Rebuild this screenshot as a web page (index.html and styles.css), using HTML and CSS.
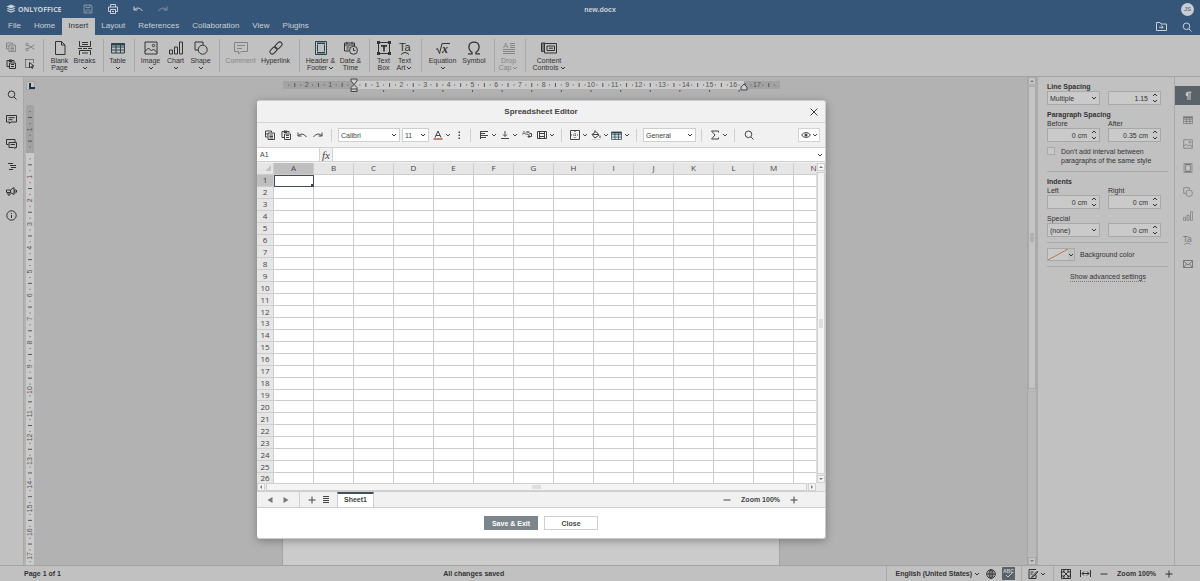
FILE: index.html
```html
<!DOCTYPE html>
<html lang="en">
<head>
  <meta charset="UTF-8">
  <meta name="viewport" content="width=device-width, initial-scale=1.0">
  <title>new.docx</title>
  <link rel="stylesheet" href="styles.css">
</head>
<body>

  <!-- Icons used in more than one place -->
  <svg class="defs" aria-hidden="true">
    <symbol id="i-down" viewBox="0 0 6 6"><path d="M1 2l2 2 2-2"/></symbol>
    <symbol id="i-undo" viewBox="0 0 10 10"><path d="M1 2.500v3.500h3.500M1 6q4.500-4.500 8.500 1"/></symbol>
    <symbol id="i-redo" viewBox="0 0 10 10"><path d="M9 2.500v3.500h-3.500M9 6q-4.500-4.500-8.500 1"/></symbol>
    <symbol id="i-copy" viewBox="0 0 10 10"><path d="M2.500 7h-2V1h6v1.500M3 3h6.500v6.500H3zM4.500 5h3.500M4.500 6.500h3.500M4.500 8h3.500M2 3v2"/></symbol>
    <symbol id="i-paste" viewBox="0 0 10 10"><path d="M3 7.500H1V1.500h7v1.500M3 1h3v1.500H3zM3.500 4h6v5.500h-6zM5 5.500h3M5 7.500h3"/></symbol>
    <symbol id="i-search" viewBox="0 0 10 10"><circle cx="4.500" cy="4.300" r="3.300"/><path d="M7 7l2.500 2.500"/></symbol>
    <symbol id="i-plus" viewBox="0 0 8 8"><path d="M4 .5v7M.5 4h7"/></symbol>
    <symbol id="i-minus" viewBox="0 0 8 8"><path d="M.5 4h7"/></symbol>
    <symbol id="i-table" viewBox="0 0 14 14"><path d="M.5 2.500h13v9.500H.5zM.5 6h13M.5 9h13M5 3v9M9.500 3v9"/><path class="fill" d="M.5 2.500h13v2H.5z"/></symbol>
    <symbol id="i-image" viewBox="0 0 14 14"><path d="M1 1h12v12H1zM1 10.500l3.500-3.500 3 3 2-2 3.500 3.500"/><circle cx="9.500" cy="4.500" r="1.200"/></symbol>
    <symbol id="i-chart" viewBox="0 0 14 14"><path d="M.5 9h3v4h-3zM5.500 6h3v7h-3zM10.500 1h3v12h-3z"/></symbol>
    <symbol id="i-shape" viewBox="0 0 14 14"><path d="M4.500 9H1V1h8v3"/><circle cx="8.700" cy="8.700" r="4.500"/></symbol>
    <symbol id="i-head" viewBox="0 0 14 14"><path d="M1.500.5h11v13h-11zM3.500 3.500v7M10.500 3.500v7"/><path class="fill" d="M3 1.500h8v1.500H3zM3 11h8v1.500H3z"/></symbol>
    <symbol id="i-spin" viewBox="0 0 6 12"><path d="M1 4l2-2 2 2M1 8l2 2 2-2"/></symbol>
  </svg>

  <header class="header">
    <div class="title-row">
      <a class="logo" href="#">
        <svg class="ic10" viewBox="0 0 10 10"><path class="fill" d="M5 .5l4.500 2-4.500 2-4.500-2zM.5 4.500l1.500-.6 3 1.300 3-1.300 1.500.6-4.500 2zM.5 6.700L2 6l3 1.400L8 6l1.500.7-4.500 2.100z"/></svg>
        ONLYOFFICE
      </a>
      <div class="quick">
        <button class="faded" aria-label="Save"><svg class="ic10" viewBox="0 0 10 10"><path d="M1 1h7l1 1v7H1zM3 1v2.500h4V1M3 9V6h4v3"/></svg></button>
        <button aria-label="Print"><svg class="ic10" viewBox="0 0 10 10"><path d="M2.500 3V.5h5V3M2 7.500H.5V3h9v4.500H8M2.500 5.500h5v4h-5zM4 7.500h2"/></svg></button>
        <button aria-label="Undo"><svg class="ic10"><use href="#i-undo"/></svg></button>
        <button class="faded" aria-label="Redo"><svg class="ic10"><use href="#i-redo"/></svg></button>
      </div>
      <div class="doc-name">new.docx</div>
      <div class="avatar">JS</div>
    </div>
    <nav class="tabs">
      <a href="#">File</a>
      <a href="#">Home</a>
      <a href="#" class="active">Insert</a>
      <a href="#">Layout</a>
      <a href="#">References</a>
      <a href="#">Collaboration</a>
      <a href="#">View</a>
      <a href="#">Plugins</a>
      <div class="tab-tools">
        <button aria-label="Open file location"><svg class="ic11" viewBox="0 0 11 11"><path d="M.5 9.500V1.500h3.500l1 1.500h5.500v6.500zM3 6.200h4M5.500 4.500l1.700 1.700-1.700 1.700"/></svg></button>
        <button aria-label="Search"><svg class="ic10"><use href="#i-search"/></svg></button>
      </div>
    </nav>
  </header>

  <div class="toolbar">
    <div class="clip">
      <button class="off" aria-label="Copy"><svg class="ic10"><use href="#i-copy"/></svg></button>
      <button class="off" aria-label="Cut"><svg class="ic10" viewBox="0 0 10 10"><circle cx="2" cy="2.500" r="1.300"/><circle cx="2" cy="7.500" r="1.300"/><path d="M3 3.300l6.500 4M3 6.700l6.500-4"/></svg></button>
      <button aria-label="Paste"><svg class="ic10"><use href="#i-paste"/></svg></button>
      <button aria-label="Select all"><svg class="ic10" viewBox="0 0 10 10"><path stroke-dasharray="1 1" d="M.5.5h8v3M.5.5v8h4"/><path d="M4.500 3.500v5.500l1.500-1.500 1 2 1-.5-1-2h2z"/></svg></button>
    </div>

    <div class="group">
      <button class="tool m"><svg viewBox="0 0 14 14"><path d="M2.500.5h6l3.500 3.500v9.500H2.500zM8.500.5V4H12"/></svg>Blank<br>Page</button>
      <button class="tool m"><svg viewBox="0 0 14 14"><path d="M1.500 0v5.500h11V0M4 1.500h6M4 3.500h6M0 7.500h4M5 7.500h4M10 7.500h4M1.500 14v-4.500h11V14M4 12h6"/></svg>Breaks<svg class="dn"><use href="#i-down"/></svg></button>
    </div>
    <div class="group">
      <button class="tool s"><svg class="teal"><use href="#i-table"/></svg>Table<svg class="dn"><use href="#i-down"/></svg></button>
    </div>
    <div class="group">
      <button class="tool m"><svg><use href="#i-image"/></svg>Image<svg class="dn"><use href="#i-down"/></svg></button>
      <button class="tool m"><svg><use href="#i-chart"/></svg>Chart<svg class="dn"><use href="#i-down"/></svg></button>
      <button class="tool m"><svg><use href="#i-shape"/></svg>Shape<svg class="dn"><use href="#i-down"/></svg></button>
    </div>
    <div class="group">
      <button class="tool l off" disabled><svg viewBox="0 0 14 14"><path d="M.5 1.500h13v9H7l-2.500 2.500v-2.500h-4zM3 4.500h8M3 7.500h5"/></svg>Comment</button>
      <button class="tool l"><svg viewBox="0 0 14 14"><rect x="-4" y="-2.300" width="8" height="4.600" rx="2.300" transform="translate(4.500 9.500) rotate(-45)"/><rect x="-4" y="-2.300" width="8" height="4.600" rx="2.300" transform="translate(9.500 4.500) rotate(-45)"/></svg>Hyperlink</button>
    </div>
    <div class="group">
      <button class="tool l"><svg class="teal"><use href="#i-head"/></svg>Header &amp;<br><span>Footer<svg class="dn"><use href="#i-down"/></svg></span></button>
      <button class="tool m"><svg viewBox="0 0 14 14"><path d="M5 10H.5V2h10v3M.5 4h10M3 .8V3M8 .8V3M2.500 6h3M2.500 8h2"/><circle cx="9.500" cy="9.300" r="4"/><path d="M9.500 7v2.500h2"/></svg>Date &amp;<br>Time</button>
    </div>
    <div class="group">
      <button class="tool s"><svg viewBox="0 0 14 14"><path d="M1.500 1.500h11v11h-11z"/><path class="fill" d="M0 0h3v3H0zM11 0h3v3h-3zM0 11h3v3H0zM11 11h3v3h-3z"/><path stroke-width="1.700" d="M4 4.800h6M7 5v5.500"/></svg>Text<br>Box</button>
      <button class="tool s"><svg viewBox="0 0 14 14"><text x="1" y="10" font-size="11">Ta</text><path d="M3 13.500q4-4 8 0"/></svg>Text<br><span>Art<svg class="dn"><use href="#i-down"/></svg></span></button>
    </div>
    <div class="group">
      <button class="tool l"><svg viewBox="0 0 14 14"><path d="M0 8.500l1.500-1 2 5L6 2.500h8"/><text class="serif" x="6" y="12" font-size="12">x</text></svg>Equation<svg class="dn"><use href="#i-down"/></svg></button>
      <button class="tool n"><svg viewBox="0 0 14 14"><path stroke-width="1.300" d="M1 12.800h4v-1.500C.5 8.500.8 1.200 7 1.200s6.500 7.300 2 10.100v1.500h4"/></svg>Symbol</button>
    </div>
    <div class="group">
      <button class="tool s off" disabled><svg viewBox="0 0 14 14"><text x="1" y="7" font-size="8">A</text><path d="M8 2.500h5M8 4.500h5M8 6.500h5M1 8.500h12M1 10.500h12M1 12.500h12"/></svg>Drop<br><span>Cap<svg class="dn"><use href="#i-down"/></svg></span></button>
    </div>
    <div class="group">
      <button class="tool xl"><svg class="wide" viewBox="0 0 16 14"><path d="M2.500 10.500H.5V2H4M3.500 2.500h12v9.500h-12zM2 2v8.500M6 5h7.500v4.500H6zM8 7.200h4"/></svg>Content<br><span>Controls<svg class="dn"><use href="#i-down"/></svg></span></button>
    </div>
  </div>

  <main class="main">
    <aside class="rail left">
      <button aria-label="Search"><svg class="ic10"><use href="#i-search"/></svg></button>
      <button aria-label="Comments"><svg class="ic11" viewBox="0 0 11 11"><path d="M.5 1.500h10v6.500H5L3.500 9.500V8h-3zM2.500 3.700h6M2.500 5.700h4"/></svg></button>
      <button aria-label="Chat"><svg class="ic11" viewBox="0 0 11 11"><path d="M2.500 6.500h-2v-5h8.500V4M3 4.500h7.500v5H9v1L7.500 9.500H3zM4.500 6.500h4.500"/></svg></button>
      <button aria-label="Headings"><svg class="ic10" viewBox="0 0 10 10"><path d="M1 1.500h5M3 3.500h6M4 5.500h5M2 7.500h4"/></svg></button>
      <button aria-label="Feedback"><svg class="ic11" viewBox="0 0 11 11"><path d="M.5 4h4l3.500-2.500v7L4.500 6.500h-4zM2 6.500V9h2V6.500M9 3v4.500M10.500 4v2.500M4.500 4v2.500"/></svg></button>
      <button aria-label="About"><svg class="ic11" viewBox="0 0 11 11"><circle cx="5.500" cy="5.500" r="4.700"/><path d="M5.500 5v3M5.500 3v1"/></svg></button>
    </aside>

    <section class="canvas">
      <div class="v-side">
        <div class="tab-mark"></div>
        <svg id="vRuler" class="v-ruler"></svg>
      </div>
      <div class="paper-area">
        <svg id="hRuler" class="h-ruler"></svg>
        <div class="paper"></div>
      </div>
      <div class="scroll">
        <i class="arrow up"></i>
        <div class="thumb"><i></i></div>
        <i class="arrow"></i>
      </div>
    </section>

    <aside class="panel">
      <h3>Line Spacing</h3>
      <div class="pair">
        <select aria-label="Line spacing"><option>Multiple</option></select>
        <span class="spin"><input value="1.15" aria-label="Line spacing value"><svg><use href="#i-spin"/></svg></span>
      </div>
      <h3 class="next">Paragraph Spacing</h3>
      <div class="pair">
        <label for="before">Before</label><label for="after">After</label>
        <span class="spin"><input id="before" value="0 cm"><svg><use href="#i-spin"/></svg></span>
        <span class="spin"><input id="after" value="0.35 cm"><svg><use href="#i-spin"/></svg></span>
      </div>
      <div class="check">
        <input type="checkbox" id="noInterval">
        <label for="noInterval">Don't add interval between<br>paragraphs of the same style</label>
      </div>
      <hr>
      <h3>Indents</h3>
      <div class="pair">
        <label for="indL">Left</label><label for="indR">Right</label>
        <span class="spin"><input id="indL" value="0 cm"><svg><use href="#i-spin"/></svg></span>
        <span class="spin"><input id="indR" value="0 cm"><svg><use href="#i-spin"/></svg></span>
      </div>
      <div class="pair special">
        <label for="special">Special</label><span></span>
        <select id="special"><option>(none)</option></select>
        <span class="spin"><input value="0 cm" aria-label="Special indent"><svg><use href="#i-spin"/></svg></span>
      </div>
      <hr>
      <div class="bg-row">
        <button id="bgColor" class="swatch"><svg class="none" viewBox="0 0 20 11"><path d="M0 11L20 0"/></svg><svg class="dn"><use href="#i-down"/></svg></button>
        <label for="bgColor">Background color</label>
      </div>
      <hr>
      <a class="advanced" href="#">Show advanced settings</a>
    </aside>

    <aside class="rail right">
      <button class="active" aria-label="Paragraph"><svg class="ic10" viewBox="0 0 10 10"><path class="fill" d="M5 1v4.500a2.200 2.200 0 010-4.500z"/><path d="M4.500 1.200h4M5 1v8M7 1v8"/></svg></button>
      <button aria-label="Table"><svg class="ic10"><use href="#i-table"/></svg></button>
      <button aria-label="Image"><svg class="ic10"><use href="#i-image"/></svg></button>
      <button aria-label="Header"><svg class="ic10"><use href="#i-head"/></svg></button>
      <button aria-label="Shape"><svg class="ic10"><use href="#i-shape"/></svg></button>
      <button aria-label="Chart"><svg class="ic10"><use href="#i-chart"/></svg></button>
      <button aria-label="Text art"><svg class="ic11" viewBox="0 0 14 14"><text x="1" y="10" font-size="11">Ta</text><path d="M3 13.500q4-4 8 0"/></svg></button>
      <button aria-label="Mail merge"><svg class="ic10" viewBox="0 0 10 10"><path d="M.5 1.500h9v7h-9zM.5 2l4.500 4 4.500-4M.5 8.500l3-3.500M9.500 8.500l-3-3.500"/></svg></button>
    </aside>
  </main>

  <footer class="status">
    <span class="pages">Page 1 of 1</span>
    <span class="saved">All changes saved</span>
    <div class="st-group lang">
      <button>English (United States)<svg class="dn"><use href="#i-down"/></svg></button>
      <button aria-label="Document language"><svg class="ic10" viewBox="0 0 10 10"><circle cx="5" cy="5" r="4.300"/><ellipse cx="5" cy="5" rx="2" ry="4.300"/><path d="M.7 5h8.600M5 .7v8.600"/></svg></button>
      <button class="spell" aria-label="Spell checking"><svg class="ic11" viewBox="0 0 11 11"><text x="0" y="5" font-size="5">ABC</text><path d="M3 7l2 2 5-5"/></svg></button>
    </div>
    <div class="st-group review">
      <button aria-label="Track changes"><svg class="ic10" viewBox="0 0 10 10"><path d="M8 6v3.500H1V.5h7M2.500 3h3M2.500 5h2M9.500 2l-5 5-1 1.500 1.800-.7 4.700-5z"/></svg><svg class="dn"><use href="#i-down"/></svg></button>
    </div>
    <div class="st-group zoom">
      <button aria-label="Fit to page"><svg class="ic10" viewBox="0 0 10 10"><path d="M.5.5h9v9h-9zM2 4V2h2M6 2h2v2M8 6v2H6M4 8H2V6M2 2l6 6M8 2L2 8"/></svg></button>
      <button aria-label="Fit to width"><svg class="ic11" viewBox="0 0 11 11"><path d="M.5 2v7M10.500 2v7M2 5.500h7M4 3.500l-2 2 2 2M7 3.500l2 2-2 2"/></svg></button>
      <button aria-label="Zoom out"><svg class="ic8"><use href="#i-minus"/></svg></button>
      <span>Zoom 100%</span>
      <button aria-label="Zoom in"><svg class="ic8"><use href="#i-plus"/></svg></button>
    </div>
  </footer>

  <!-- Spreadsheet editor window -->
  <div class="dialog" role="dialog" aria-labelledby="dlgTitle">
    <div class="dlg-title">
      <h2 id="dlgTitle">Spreadsheet Editor</h2>
      <button class="close" aria-label="Close window"><svg class="ic8" viewBox="0 0 8 8"><path d="M.5.5l7 7M7.500.5l-7 7"/></svg></button>
    </div>

    <div class="dlg-tools">
      <button aria-label="Copy"><svg class="ic10"><use href="#i-copy"/></svg></button>
      <button aria-label="Paste"><svg class="ic10"><use href="#i-paste"/></svg></button>
      <button aria-label="Undo"><svg class="ic10"><use href="#i-undo"/></svg></button>
      <button aria-label="Redo"><svg class="ic10"><use href="#i-redo"/></svg></button>
      <i class="sep"></i>
      <select class="font" aria-label="Font"><option>Calibri</option></select>
      <select class="size" aria-label="Font size"><option>11</option></select>
      <button class="dd" aria-label="Font color"><svg class="ic10" viewBox="0 0 10 10"><path d="M2 7.500L5 1l3 6.500M3 5.500h4"/><path class="rust" d="M.5 8h9v2h-9z"/></svg><svg class="dn"><use href="#i-down"/></svg></button>
      <button class="dots" aria-label="More"><svg class="ic10" viewBox="0 0 10 10"><path class="fill" d="M4.500 1.500H6V3H4.500zM4.500 4.500H6V6H4.500zM4.500 7.500H6V9H4.500z"/></svg></button>
      <i class="sep"></i>
      <button class="dd" aria-label="Horizontal align"><svg class="ic10" viewBox="0 0 10 10"><path d="M1.500 1v8M2 1.500h7M2 3.500h4M2 5.500h7M2 7.500h5"/></svg><svg class="dn"><use href="#i-down"/></svg></button>
      <button class="dd" aria-label="Vertical align"><svg class="ic10" viewBox="0 0 10 10"><path d="M5 1v5M3 4.500l2 2 2-2M1 8.500h8"/></svg><svg class="dn"><use href="#i-down"/></svg></button>
      <button aria-label="Wrap text"><svg class="ic10" viewBox="0 0 10 10"><text x="0" y="5" font-size="6">AB</text><path d="M8 3.500h1.500v3H6M7.500 5L6 6.500 7.500 8"/></svg></button>
      <button class="dd" aria-label="Merge"><svg class="ic10" viewBox="0 0 10 10"><path d="M.5 1.500h9v7h-9zM2.500 3.500h5v3h-5zM2.500 1.500v7M7.500 1.500v7"/></svg><svg class="dn"><use href="#i-down"/></svg></button>
      <i class="sep"></i>
      <button class="dd" aria-label="Borders"><svg class="ic10" viewBox="0 0 10 10"><path d="M.5.5h9v9h-9z"/><path stroke-dasharray="1 1" d="M5 1v8M1 5h8"/></svg><svg class="dn"><use href="#i-down"/></svg></button>
      <button class="dd" aria-label="Fill"><svg class="ic10" viewBox="0 0 10 10"><path d="M1 4.500l4-3 3 3.500-4 3zM4 2V.3M1.500 4.500h6M9 5.500v2.500"/><path class="pale" d="M.5 9h9v1h-9z"/></svg><svg class="dn"><use href="#i-down"/></svg></button>
      <button class="dd teal" aria-label="Format as table"><svg class="ic11"><use href="#i-table"/></svg><svg class="dn"><use href="#i-down"/></svg></button>
      <i class="sep"></i>
      <select class="format" aria-label="Number format"><option>General</option></select>
      <i class="sep"></i>
      <button class="dd" aria-label="Summation"><svg class="ic10" viewBox="0 0 10 10"><path d="M8.500 2.500V1H1.500l3.500 4-3.500 4h7V7.500"/></svg><svg class="dn"><use href="#i-down"/></svg></button>
      <i class="sep"></i>
      <button aria-label="Find"><svg class="ic10"><use href="#i-search"/></svg></button>
      <button class="view" aria-label="View settings"><svg class="ic10" viewBox="0 0 10 10"><path d="M.5 5q4.500-5 9 0-4.500 5-9 0z"/><circle class="fill" cx="5" cy="5" r="1.500"/></svg><svg class="dn"><use href="#i-down"/></svg></button>
    </div>

    <div class="formula">
      <input class="cell-name" value="A1" aria-label="Cell name">
      <button class="fx">fx</button>
      <input class="cell-text" aria-label="Formula">
      <button class="expand" aria-label="Expand"><svg class="dn"><use href="#i-down"/></svg></button>
    </div>

    <div class="sheet">
      <div class="grid-wrap">
        <table id="grid" class="grid"></table>
      </div>
      <div class="scroll small">
        <i class="arrow up"></i>
        <div class="thumb"><i></i></div>
        <i class="arrow"></i>
      </div>
    </div>
    <div class="h-scroll">
      <i class="arrow prev"></i>
      <div class="thumb"><i></i></div>
      <i class="arrow fwd"></i>
    </div>

    <div class="sheet-bar">
      <button aria-label="Previous sheet"><svg class="ic8" viewBox="0 0 8 8"><path class="fill" d="M6.500 1v6L1.500 4z"/></svg></button>
      <button aria-label="Next sheet"><svg class="ic8" viewBox="0 0 8 8"><path class="fill" d="M1.500 1v6l5-3z"/></svg></button>
      <i class="line"></i>
      <button class="add" aria-label="Add sheet"><svg class="ic8"><use href="#i-plus"/></svg></button>
      <button class="add" aria-label="Sheet list"><svg class="ic8" viewBox="0 0 8 8"><path d="M1 .5h6M1 2.500h6M1 4.500h6M1 6.500h6"/></svg></button>
      <a class="sheet-tab" href="#">Sheet1</a>
      <div class="sheet-zoom">
        <button aria-label="Zoom out"><svg class="ic8"><use href="#i-minus"/></svg></button>
        <span>Zoom 100%</span>
        <button aria-label="Zoom in"><svg class="ic8"><use href="#i-plus"/></svg></button>
      </div>
    </div>

    <div class="dlg-footer">
      <button class="primary">Save &amp; Exit</button>
      <button>Close</button>
    </div>
  </div>

  <script src="script.js"></script>
</body>
</html>
```
FILE: styles.css
```css
* {
  box-sizing: border-box;
}

body {
  margin: 0;
  height: 100vh;
  overflow: hidden;
  display: flex;
  flex-direction: column;
  font-family: "Liberation Sans", Arial, sans-serif;
  font-size: 7px;
  line-height: 9px;
  color: #333;
  background: #b2b2b2;
}

button, input, select {
  font: inherit;
  color: inherit;
  margin: 0;
  padding: 0;
  border: 0;
  background: none;
  border-radius: 0;
}

button {
  display: flex;
  align-items: center;
  justify-content: center;
}

a {
  color: inherit;
  text-decoration: none;
}

h2, h3 {
  margin: 0;
  font-size: 7px;
  line-height: 9px;
}

svg {
  display: block;
  flex: none;
  fill: none;
  stroke: currentColor;
  stroke-width: 1;
}

svg text {
  fill: currentColor;
  stroke: none;
  font-family: "Liberation Sans", Arial, sans-serif;
}

svg .serif {
  font-family: "Liberation Serif", serif;
  font-style: italic;
  font-weight: bold;
}

svg .fill {
  fill: currentColor;
  stroke: none;
}

.defs {
  position: absolute;
  width: 0;
  height: 0;
}

.ic8 { width: 8px; height: 8px; }
.ic10 { width: 10px; height: 10px; }
.ic11 { width: 11px; height: 11px; }
.dn { width: 6px; height: 6px; }
.teal { color: #2b4750; }

/* Header */
.header {
  background: #365679;
  color: #c9d0d8;
}

.title-row {
  display: grid;
  grid-template-columns: 80px 1fr auto 1fr 80px;
  align-items: center;
  height: 18px;
}

.logo {
  display: flex;
  align-items: center;
  gap: 2px;
  padding-left: 6px;
  font-family: "Open Sans", sans-serif;
  font-size: 7px;
  font-weight: bold;
}

.quick {
  display: flex;
}

.quick button {
  width: 15px;
  margin-right: 10px;
}

.faded {
  opacity: 0.5;
}

.doc-name {
  font-weight: bold;
}

.avatar {
  grid-column: 5;
  justify-self: end;
  width: 13px;
  height: 13px;
  margin-right: 6px;
  border-radius: 50%;
  background: #c9ced4;
  color: #365679;
  font-size: 6px;
  line-height: 13px;
  text-align: center;
}

.tabs {
  display: flex;
  height: 17px;
  padding-left: 2px;
  font-size: 8px;
  line-height: 16px;
}

.tabs a {
  padding: 0 7px 0 6px;
}

.tabs .active {
  background: #c1c1c1;
  color: #333;
}

.tab-tools {
  margin-left: auto;
  display: flex;
  gap: 15px;
  padding-right: 8px;
}

/* Toolbar */
.toolbar {
  display: flex;
  height: 42px;
  background: #c1c1c1;
  border-bottom: 1px solid #a3a3a3;
}

.clip {
  width: 43px;
  padding: 3px 4px 4px 2px;
  display: grid;
  grid-template-columns: 1fr 1fr;
}

.off {
  color: #858585;
}

.group {
  display: flex;
  align-items: flex-start;
  height: 33px;
  margin-top: 4px;
  padding: 2px 6px 0 3px;
  border-left: 1px solid #a8a8a8;
}

.group:last-child {
  padding-right: 0;
}

.tool {
  display: block;
  line-height: 7px;
  text-align: center;
  white-space: nowrap;
}

.tool.s { width: 21px; }
.tool.m { width: 25px; }
.tool.n { width: 28px; }
.tool.l { width: 35px; }
.tool.xl { width: 40px; }

.tool svg {
  width: 14px;
  height: 14px;
  margin: 0 auto 2px;
}

.tool svg.wide {
  width: 16px;
}

.tool svg.dn {
  width: 6px;
  height: 6px;
  margin: 1px auto 0;
}

.tool span {
  display: flex;
  justify-content: center;
}

.tool span svg.dn {
  margin: 1px 0 0 1px;
}

/* Main area */
.main {
  flex: 1;
  min-height: 0;
  display: flex;
}

.rail {
  display: flex;
  flex-direction: column;
  background: #c1c1c1;
}

.rail.left {
  width: 24px;
  padding-top: 12px;
  gap: 12px;
  border-right: 1px solid #a8a8a8;
}

.rail.left button {
  height: 12px;
}

.rail.right {
  width: 26px;
  padding-top: 9px;
  gap: 5px;
  border-left: 1px solid #a8a8a8;
  color: #777;
}

.rail.right button {
  height: 19px;
}

.rail.right .active {
  background: #5a626a;
  color: #ccc;
}

.canvas {
  flex: 1;
  min-width: 0;
  display: flex;
  background: #b2b2b2;
}

.v-side {
  width: 11px;
  padding: 4px 0 0 2px;
  overflow: hidden;
}

.tab-mark {
  width: 9px;
  height: 9px;
  margin-bottom: 15px;
  border: 1px solid #a3a3a3;
  background: #c5c5c5;
}

.tab-mark::after {
  content: "";
  display: block;
  width: 4px;
  height: 4px;
  margin: 1px 0 0 2px;
  border-left: 2px solid #234;
  border-bottom: 2px solid #234;
}

.paper-area {
  flex: 1;
  display: flex;
  flex-direction: column;
  align-items: center;
  padding-top: 1px;
}

.v-ruler {
  width: 8px;
  height: 461px;
}

.h-ruler {
  width: 497px;
  height: 16px;
}

.ruler-out { fill: #a3a3a3; stroke: none; }
.ruler-in { fill: #cbcbcb; stroke: none; }

.v-ruler, .h-ruler {
  color: #555;
  font-size: 7px;
}

.v-ruler text, .h-ruler text {
  text-anchor: middle;
}

.marker {
  fill: #ccc;
  stroke: #444;
}

.paper {
  flex: 1;
  width: 498px;
  margin-top: 10px;
  background: #cbcbcb;
  border: solid #a3a3a3;
  border-width: 1px 1px 0;
}

/* Scrollbars */
.scroll {
  width: 9px;
  display: flex;
  flex-direction: column;
  align-items: center;
  background: #b9b9b9;
  border-left: 1px solid #a8a8a8;
}

.scroll .arrow, .h-scroll .arrow {
  display: flex;
  align-items: center;
  justify-content: center;
  width: 8px;
  height: 8px;
  background: #c6c6c6;
  border: 1px solid #aaa;
}

.arrow::after {
  content: "";
  border: 2px solid transparent;
  border-top-color: #777;
  border-bottom: 0;
}

.arrow.up::after { transform: rotate(180deg); }
.arrow.prev::after { transform: rotate(90deg); }
.arrow.fwd::after { transform: rotate(-90deg); }

.scroll .thumb {
  display: flex;
  align-items: center;
  justify-content: center;
  width: 8px;
  height: 62%;
  margin: 1px 0 auto;
  background: #c4c4c4;
  border: 1px solid #aaa;
}

.scroll .thumb i {
  width: 4px;
  height: 9px;
  background: #b0b0b0;
}

/* Right panel */
.panel {
  width: 138px;
  padding: 5px 6px 0 9px;
  background: #c1c1c1;
  border-left: 2px solid #aaa;
}

.pair {
  display: grid;
  grid-template-columns: 53px 53px;
  column-gap: 8px;
}

.next {
  margin-top: 5px;
}

.special {
  margin-top: 5px;
}

select {
  appearance: none;
  padding: 0 2px;
  border: 1px solid #a8a8a8;
  background: #cacaca url("data:image/svg+xml,%3Csvg xmlns='http://www.w3.org/2000/svg' width='6' height='6' fill='none' stroke='%23333'%3E%3Cpath d='M1 2l2 2 2-2'/%3E%3C/svg%3E") no-repeat right 2px center;
}

.panel select, .spin {
  height: 14px;
}

.spin {
  display: flex;
  align-items: center;
  padding-right: 2px;
  background: #cacaca;
  border: 1px solid #a8a8a8;
}

.spin input {
  flex: 1;
  min-width: 0;
  text-align: right;
  padding-right: 4px;
}

.spin svg {
  width: 6px;
  height: 12px;
}

.check {
  display: flex;
  gap: 6px;
  margin: 5px 0 6px;
}

.check input {
  appearance: none;
  width: 8px;
  height: 8px;
  background: #cacaca;
  border: 1px solid #a8a8a8;
}

.panel hr {
  margin: 5px 0;
  border: 0;
  border-top: 1px solid #a8a8a8;
}

.bg-row {
  display: flex;
  align-items: center;
  gap: 5px;
}

.swatch {
  width: 28px;
  height: 13px;
  border: 1px solid #a8a8a8;
}

.swatch .none {
  width: 20px;
  height: 11px;
  background: #cacaca;
  color: #b07850;
}

.advanced {
  display: block;
  width: 75px;
  margin: 0 auto;
  white-space: nowrap;
  border-bottom: 1px dotted #777;
}

/* Status bar */
.status {
  display: flex;
  height: 16px;
  align-items: center;
  background: #c1c1c1;
  border-top: 1px solid #a3a3a3;
  font-weight: bold;
}

.pages {
  padding-left: 24px;
}

.saved {
  flex: 1;
  text-align: center;
}

.st-group {
  display: flex;
  align-items: center;
  height: 15px;
  border-left: 1px solid #a8a8a8;
}

.lang {
  gap: 6px;
  padding: 0 6px 0 8px;
}

.lang button:first-child {
  gap: 2px;
}

.spell {
  width: 13px;
  height: 13px;
  background: #5a626a;
  color: #c8c8c8;
}

.review {
  padding: 0 7px 0 6px;
}

.review button {
  gap: 2px;
}

.zoom {
  gap: 9px;
  padding: 0 27px 0 7px;
}

/* Dialog */
.dialog {
  position: absolute;
  top: 100px;
  left: 257px;
  width: 569px;
  display: flex;
  flex-direction: column;
  background: #fff;
  border: solid #cbcbcb;
  border-width: 1px 1px 1px 0;
  border-radius: 3px;
  box-shadow: 0 2px 8px rgba(0, 0, 0, 0.3);
  color: #444;
  overflow: hidden;
}

.dlg-title {
  display: flex;
  align-items: center;
  height: 22px;
  padding: 0 7px 0 15px;
  background: #f1f1f1;
  border-bottom: 1px solid #d3d3d3;
}

.dlg-title h2 {
  flex: 1;
  text-align: center;
  font-size: 8px;
}

.dlg-tools {
  display: flex;
  align-items: center;
  height: 25px;
  padding: 0 5px 0 5px;
  background: #f1f1f1;
  border-bottom: 1px solid #cfcfcf;
}

.dlg-tools button {
  width: 16px;
  height: 14px;
}

.dlg-tools .dd {
  width: 21px;
  gap: 2px;
}

.dlg-tools .dots {
  width: 13px;
}

.dlg-tools .view {
  width: 22px;
  margin-left: auto;
  gap: 1px;
  background: #fff;
  border: 1px solid #d3d3d3;
}

.rust {
  fill: #b58b78;
  stroke: none;
}

.pale {
  fill: #d3d3d3;
  stroke: none;
}

.sep {
  width: 1px;
  height: 13px;
  margin: 0 6px 0 5px;
  background: #d0d0d0;
}

.dlg-tools select {
  height: 14px;
  background-color: #fff;
  border-color: #cfcfcf;
}

.font { width: 62px; }
.size { width: 27px; margin: 0 2px; }
.format { width: 53px; }

.formula {
  display: flex;
  height: 14px;
  border-bottom: 1px solid #cfcfcf;
}

.cell-name {
  width: 62px;
  padding-left: 3px;
}

.fx {
  width: 14px;
  background: #f1f1f1;
  border: solid #d3d3d3;
  border-width: 0 1px;
  font: italic 11px "Liberation Serif", serif;
}

.cell-text {
  flex: 1;
}

.expand {
  width: 11px;
}

.sheet {
  display: flex;
  height: 321px;
  padding-top: 1px;
  background: #f1f1f1;
}

.grid-wrap {
  flex: 1;
  min-width: 0;
  overflow: hidden;
}

.grid {
  width: 577px;
  height: 322px;
  table-layout: fixed;
  border-collapse: separate;
  border-spacing: 0;
  background: #fff;
  font-family: "Open Sans", sans-serif;
  font-size: 8px;
  line-height: 10px;
}

.grid th, .grid td {
  padding: 0;
  border: solid #cdcdcd;
  border-width: 0 1px 1px 0;
}

.grid th {
  background: #e6e6e6;
  font-weight: normal;
  text-align: center;
}

.grid th:first-child {
  width: 17px;
}

.grid .on {
  background: #bfbfbf;
}

.grid .corner::after {
  content: "";
  display: block;
  width: 0;
  margin-left: 8px;
  border-left: 6px solid transparent;
  border-bottom: 6px solid #c4c4c4;
}

.grid .cell-on {
  position: relative;
  outline: 1px solid #3c4d58;
  outline-offset: -1px;
}

.cell-on::after {
  content: "";
  position: absolute;
  right: -1px;
  bottom: -1px;
  width: 3px;
  height: 3px;
  background: #3c4d58;
}

.dialog .thumb, .dialog .arrow {
  background: #f4f4f4;
  border-color: #d0d0d0;
}

.small {
  background: #ebebeb;
  border-color: #ddd;
}

.dialog .small .thumb {
  flex: 1;
  margin: 1px 0;
}

.dialog .thumb i {
  background: #dedede;
}

.h-scroll {
  display: flex;
  height: 8px;
  padding-right: 9px;
  background: #ebebeb;
}

.h-scroll .thumb {
  flex: 1;
  display: flex;
  align-items: center;
  justify-content: center;
  margin: 0 1px;
  border: 1px solid #d0d0d0;
}

.h-scroll .thumb i {
  width: 9px;
  height: 4px;
}

.sheet-bar {
  display: flex;
  align-items: center;
  height: 17px;
  padding-left: 5px;
  background: #f1f1f1;
  border: solid #cfcfcf;
  border-width: 1px 0;
  font-weight: bold;
}

.sheet-bar > button {
  width: 16px;
  color: #777;
}

.line {
  width: 1px;
  height: 15px;
  margin: 0 5px;
  background: #cfcfcf;
}

.sheet-bar .add {
  width: 14px;
  color: #444;
}

.sheet-tab {
  width: 37px;
  height: 15px;
  margin-left: 4px;
  background: #fff;
  border: 1px solid #cfcfcf;
  border-top: 2px solid #444f58;
  border-bottom: 0;
  line-height: 12px;
  text-align: center;
}

.sheet-zoom {
  display: flex;
  align-items: center;
  gap: 10px;
  margin-left: auto;
  padding-right: 27px;
}

.dlg-footer {
  display: flex;
  justify-content: center;
  gap: 6px;
  padding: 8px 0;
}

.dlg-footer button {
  width: 54px;
  height: 14px;
  border: 1px solid #cfcfcf;
  font-weight: bold;
}

.dlg-footer .primary {
  background: #7d858c;
  border-color: #7d858c;
  color: #fff;
}
```
FILE: script.js
```js
var CM = 23.7; // one centimetre on the rulers

// Spreadsheet cells
var letters = 'ABCDEFGHIJKLMN'.split('');
var html = '<tr><th class="corner"></th>';
letters.forEach(function (l) {
  html += '<th' + (l === 'A' ? ' class="on"' : '') + '>' + l + '</th>';
});
html += '</tr>';
for (var r = 1; r <= 26; r++) {
  html += '<tr><th' + (r === 1 ? ' class="on"' : '') + '>' + r + '</th>';
  for (var c = 0; c < letters.length; c++) {
    html += r === 1 && c === 0 ? '<td class="cell-on"></td>' : '<td></td>';
  }
  html += '</tr>';
}
document.getElementById('grid').innerHTML = html;

// Number, dot, tick, dot... for every quarter of a centimetre
function marks(zero, length, vertical) {
  var out = '';
  for (var q = -12; q < 80; q++) {
    var p = zero + q * CM / 4;
    if (q === 0 || p < 4 || p > length - 4) continue;
    var half = q % 2 === 0 ? 2 : 0.5;
    if (q % 4 === 0) {
      var n = Math.abs(q / 4);
      out += vertical
        ? '<text transform="translate(6 ' + p + ') rotate(-90)">' + n + '</text>'
        : '<text x="' + p + '" y="9">' + n + '</text>';
    } else {
      out += vertical
        ? '<path d="M' + (4 - half) + ' ' + p + 'h' + half * 2 + '"/>'
        : '<path d="M' + p + ' ' + (7 - half) + 'v' + half * 2 + '"/>';
    }
  }
  return out;
}

var h = '<rect class="ruler-out" y="3" width="497" height="8"/>' +
  '<rect class="ruler-in" x="71" y="3" width="390" height="8"/>' + marks(71, 497, false);
for (var t = 1; t < 14; t++) {
  h += '<path d="M' + (71 + t * CM * 1.25) + ' 12v2"/>';
}
h += '<path class="marker" d="M68 1h6v2l-3 3.500-3-3.500zM71 6.500l3 3v4h-6v-4zM68 11h6"/>' +
  '<path class="marker" d="M461 6l3 3v3h-6v-3z"/>';
document.getElementById('hRuler').innerHTML = h;

document.getElementById('vRuler').innerHTML =
  '<rect class="ruler-out" width="8" height="48"/>' +
  '<rect class="ruler-in" y="48" width="8" height="413"/>' + marks(48, 461, true);
```
